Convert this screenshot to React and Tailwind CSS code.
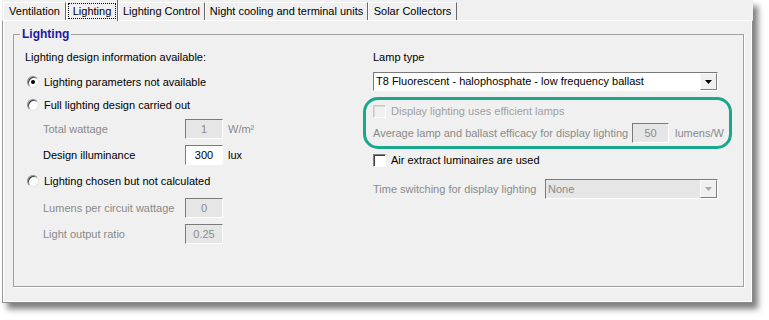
import React from "react";

const font = { fontFamily: '"Liberation Sans", Arial, sans-serif' };

function Radio({ checked }) {
  return (
    <span className="relative flex h-[12px] w-[12px] shrink-0 items-center justify-center rounded-full border border-t-[#8a8a8a] border-l-[#8a8a8a] border-r-[#e4e4e4] border-b-[#e4e4e4] bg-white shadow-[inset_1px_1px_0_#404040]">
      {checked && <span className="h-[4px] w-[4px] rounded-full bg-black" />}
    </span>
  );
}

function Check({ disabled }) {
  return (
    <span
      className={`h-[13px] w-[13px] shrink-0 border ${
        disabled
          ? "border-t-[#c8c8c8] border-l-[#c8c8c8] border-r-white border-b-white bg-[#f0f0f0] shadow-[inset_1px_1px_0_#dcdcdc]"
          : "border-t-[#808080] border-l-[#808080] border-r-white border-b-white bg-white shadow-[inset_1px_1px_0_#404040]"
      }`}
    />
  );
}

function Box({ value, white, w = "w-[38px]" }) {
  return (
    <span
      className={`flex h-[20px] ${w} shrink-0 items-center justify-center border border-t-[#7a7a7a] border-l-[#7a7a7a] border-r-white border-b-white ${
        white ? "bg-white text-black" : "bg-[#e6e6e6] text-[#8a8a8a]"
      }`}
    >
      {value}
    </span>
  );
}

function Arrow({ disabled }) {
  return (
    <span className="flex h-full w-[17px] items-center justify-center border border-t-[#f8f8f8] border-l-[#f8f8f8] border-r-[#808080] border-b-[#808080] bg-[#f0f0f0]">
      <svg width="7" height="4" viewBox="0 0 7 4">
        <path d="M0 0h7L3.5 4z" fill={disabled ? "#a8a8a8" : "#000"} />
      </svg>
    </span>
  );
}

const tabs = [
  { label: "Ventilation", w: "w-[63px]" },
  { label: "Lighting", w: "w-[52px]", active: true },
  { label: "Lighting Control", w: "w-[87px]" },
  { label: "Night cooling and terminal units", w: "w-[163px]" },
  { label: "Solar Collectors", w: "w-[89px]" },
];

export default function App() {
  return (
    <div className="h-[320px] w-[769px] bg-white text-[11px] whitespace-nowrap text-black" style={font}>
      <div className="ml-[2px] flex h-[303px] w-[751px] flex-col bg-[#f0f0f0] shadow-[5px_6px_6px_rgba(0,0,0,0.5)]">
        {/* tab strip */}
        <div className="relative z-10 flex h-[20px] items-end pl-[1px]">
          {tabs.map((t) =>
            t.active ? (
              <div
                key={t.label}
                className={`${t.w} -mb-[1px] flex h-[22px] items-center justify-center border-l border-t border-r border-l-white border-t-white border-r-[#696969] bg-[#f0f0f0]`}
              >
                <span className="border border-dotted border-black px-[4px] leading-[14px]">{t.label}</span>
              </div>
            ) : (
              <div
                key={t.label}
                className={`${t.w} flex h-[18px] items-center justify-center border-l border-t border-r border-l-white border-t-white border-r-[#696969]`}
              >
                {t.label}
              </div>
            )
          )}
        </div>

        {/* panel */}
        <div className="flex flex-1 flex-col border border-t-white border-l-[#9a9a9a] border-r-[#8a8a8a] border-b-[#8a8a8a] px-[10px] pb-[15px] shadow-[inset_1px_0_0_white,inset_-1px_-1px_0_white]">
          <fieldset className="mt-[6px] flex-1 border border-[#a0a0a0] px-[11px] shadow-[1px_1px_0_white]">
            <legend className="-ml-[5px] px-[2px] text-[12px] font-bold leading-[14px] text-[#1a1aa0]">Lighting</legend>
            <div className="mt-[6px] grid grid-cols-[348px_1fr]">
              {/* left column */}
              <div className="flex flex-col">
                <div className="flex h-[20px] items-center">Lighting design information available:</div>
                <div className="mt-[5px] flex h-[20px] items-center gap-[5px] pl-[2px]">
                  <Radio checked />
                  <span>Lighting parameters not available</span>
                </div>
                <div className="mt-[3px] flex h-[20px] items-center gap-[5px] pl-[2px]">
                  <Radio />
                  <span>Full lighting design carried out</span>
                </div>
                <div className="mt-[4px] flex h-[20px] items-center pl-[18px] text-[#8a8a8a]">
                  <span className="w-[142px]">Total wattage</span>
                  <Box value="1" />
                  <span className="ml-[5px]">W/m²</span>
                </div>
                <div className="mt-[6px] flex h-[20px] items-center pl-[18px]">
                  <span className="w-[142px]">Design illuminance</span>
                  <Box value="300" white />
                  <span className="ml-[5px]">lux</span>
                </div>
                <div className="mt-[6px] flex h-[20px] items-center gap-[5px] pl-[2px]">
                  <Radio />
                  <span>Lighting chosen but not calculated</span>
                </div>
                <div className="mt-[7px] flex h-[20px] items-center pl-[18px] text-[#8a8a8a]">
                  <span className="w-[142px]">Lumens per circuit wattage</span>
                  <Box value="0" />
                </div>
                <div className="mt-[6px] flex h-[20px] items-center pl-[18px] text-[#8a8a8a]">
                  <span className="w-[142px]">Light output ratio</span>
                  <Box value="0.25" />
                </div>
              </div>

              {/* right column */}
              <div className="flex flex-col">
                <div className="flex h-[20px] items-center">Lamp type</div>
                <div className="mt-[5px] flex h-[19px] w-[345px] items-center justify-between border border-t-[#7a7a7a] border-l-[#7a7a7a] border-r-white border-b-white bg-white pl-[2px]">
                  <span>T8 Fluorescent - halophosphate - low frequency ballast</span>
                  <Arrow />
                </div>
                <div className="-ml-[10px] mt-[6px] flex h-[52px] w-[369px] flex-col rounded-[15px] border-[3px] border-[#19a88c] pl-[7px] text-[#8a8a8a]">
                  <div className="mt-[1px] flex h-[20px] items-center gap-[5px]">
                    <Check disabled />
                    <span className="text-[#a0a0a0]">Display lighting uses efficient lamps</span>
                  </div>
                  <div className="mt-[2px] flex h-[20px] items-center">
                    <span className="w-[259px]">Average lamp and ballast efficacy for display lighting</span>
                    <Box value="50" w="w-[37px]" />
                    <span className="ml-[6px]">lumens/W</span>
                  </div>
                </div>
                <div className="mt-[1px] flex h-[20px] items-center gap-[5px]">
                  <Check />
                  <span>Air extract luminaires are used</span>
                </div>
                <div className="mt-[9px] flex h-[20px] items-center text-[#8a8a8a]">
                  <span className="w-[172px]">Time switching for display lighting</span>
                  <div className="flex h-[20px] w-[173px] items-center justify-between border border-t-[#7a7a7a] border-l-[#7a7a7a] border-r-white border-b-white bg-[#e6e6e6] pl-[2px]">
                    <span>None</span>
                    <Arrow disabled />
                  </div>
                </div>
              </div>
            </div>
          </fieldset>
        </div>
      </div>
    </div>
  );
}
